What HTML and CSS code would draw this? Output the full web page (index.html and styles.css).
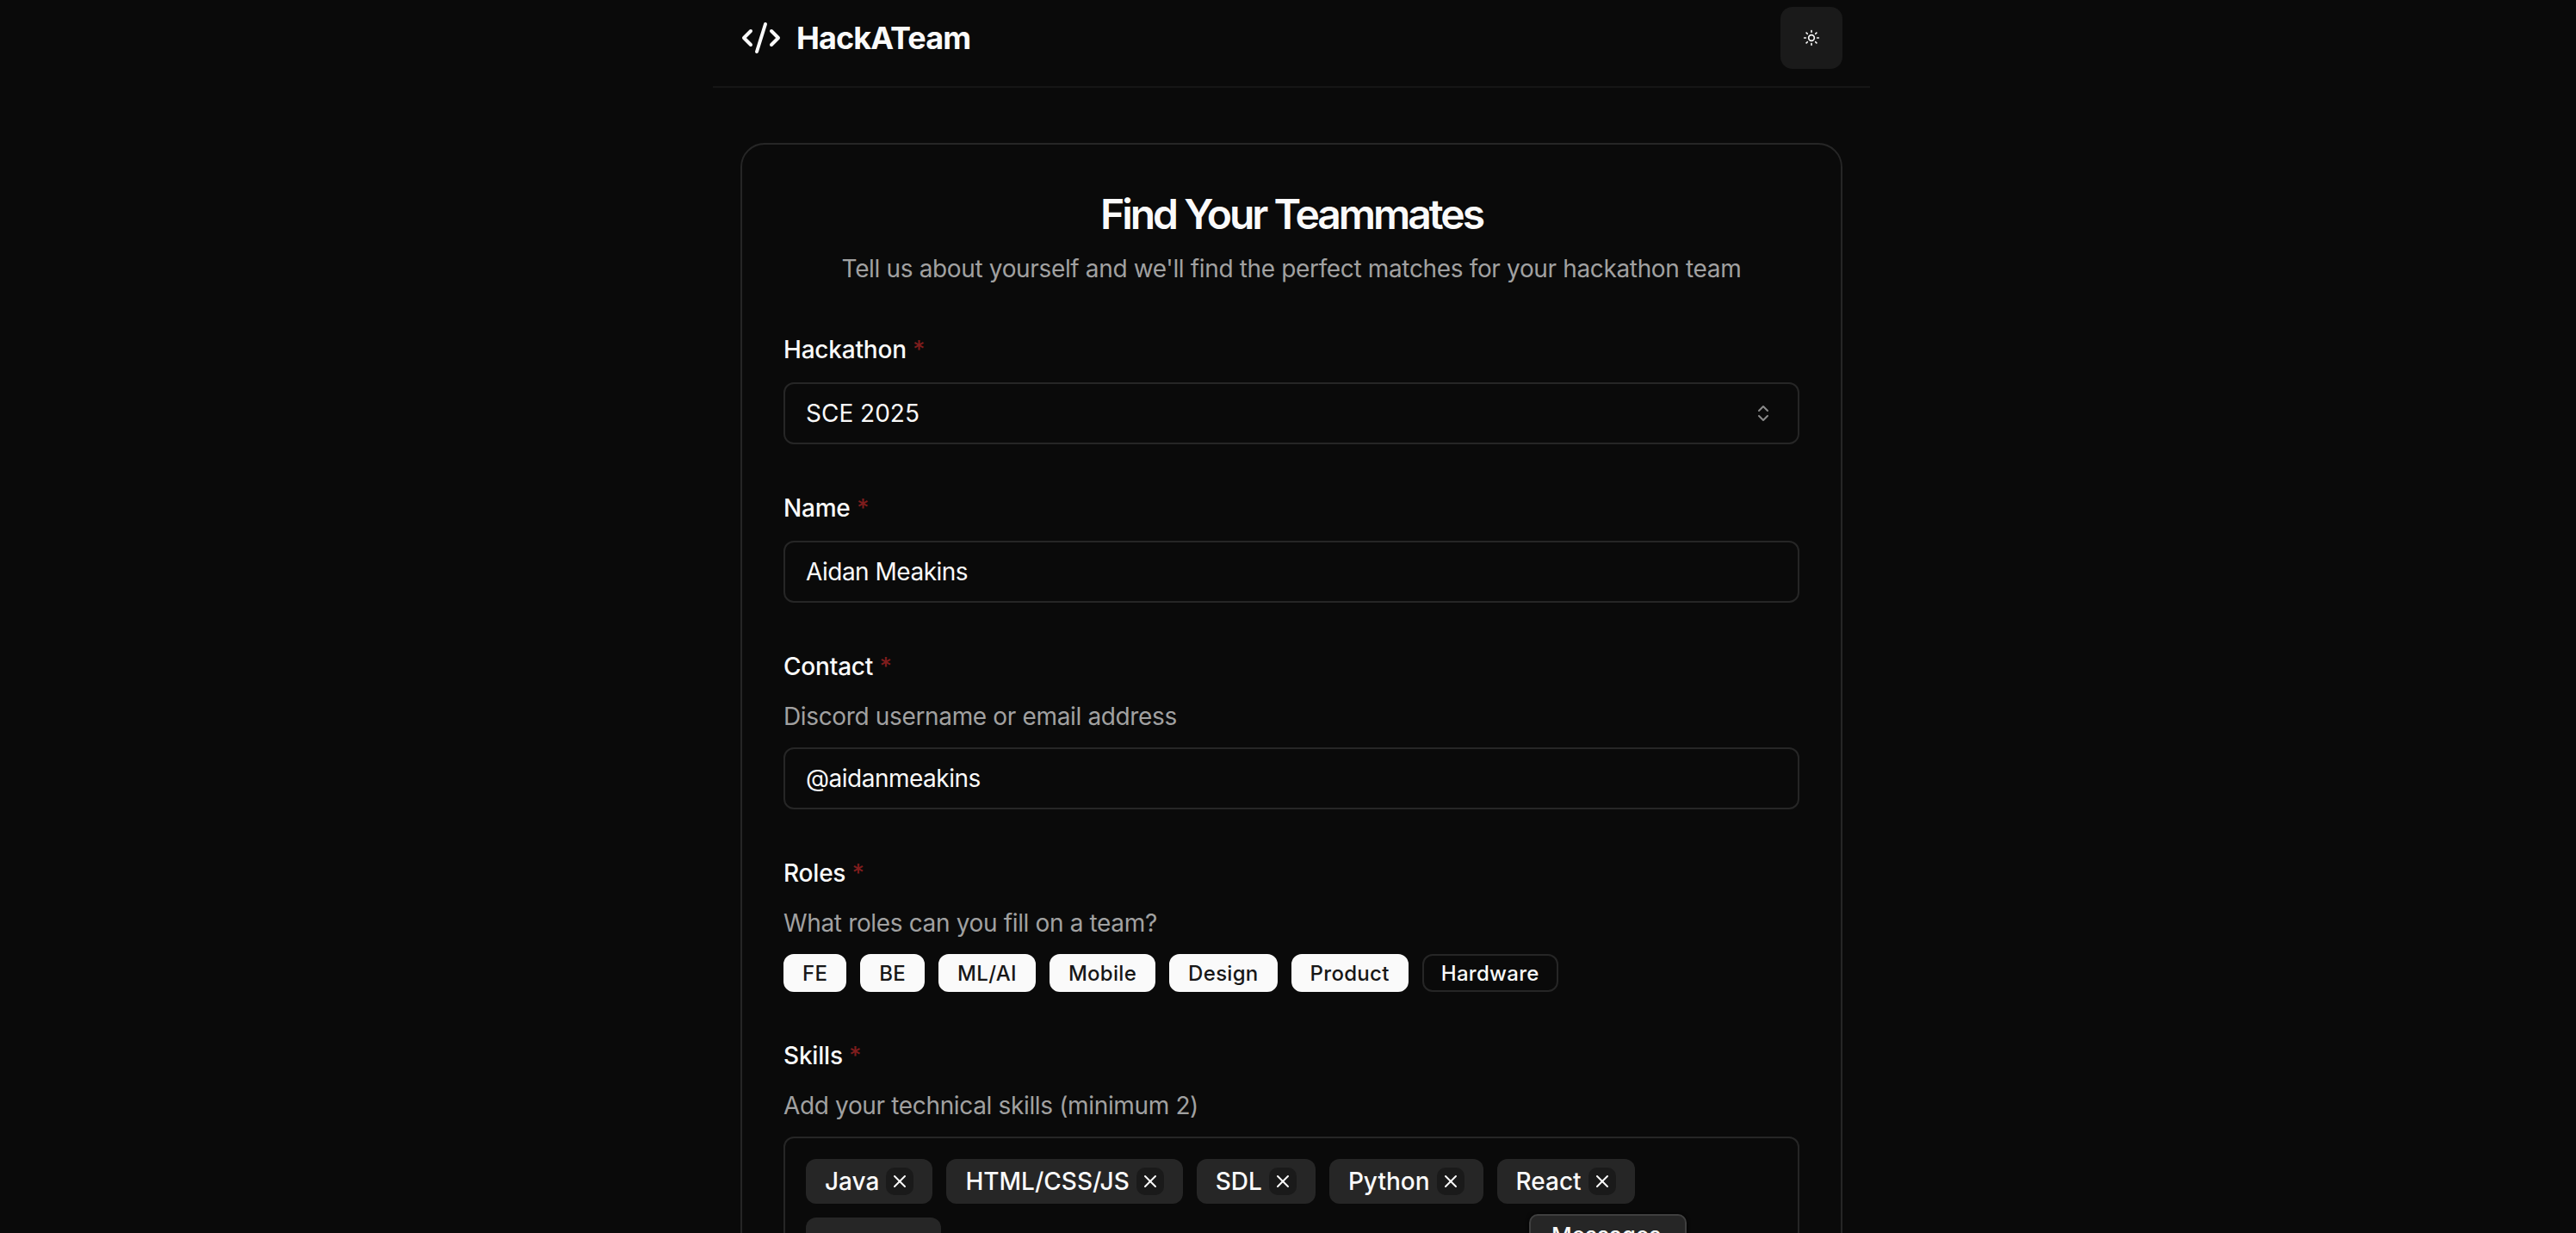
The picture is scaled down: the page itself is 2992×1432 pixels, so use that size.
FILE: index.html
```html
<!DOCTYPE html>
<html>

<head>
    <meta charset="utf-8" />
    <title>HackATeam</title>
    <meta name="viewport" content="width=device-width, initial-scale=1">
    <link rel="stylesheet" href="styles.css">
</head>

<body>
    <div class="page">
        <header class="topbar">
            <div class="brand">
                <svg class="brand-icon" viewBox="0 0 24 24" fill="none" stroke="currentColor" stroke-width="2"
                    stroke-linecap="round" stroke-linejoin="round">
                    <path d="m18 16 4-4-4-4" />
                    <path d="m6 8-4 4 4 4" />
                    <path d="m14.5 4-5 16" />
                </svg>
                <span class="brand-name">HackATeam</span>
            </div>
            <button type="button" class="theme-btn">
                <svg class="theme-icon" viewBox="0 0 24 24" fill="none" stroke="currentColor" stroke-width="2"
                    stroke-linecap="round" stroke-linejoin="round">
                    <circle cx="12" cy="12" r="4" />
                    <path d="M12 2v2" />
                    <path d="M12 20v2" />
                    <path d="m4.93 4.93 1.41 1.41" />
                    <path d="m17.66 17.66 1.41 1.41" />
                    <path d="M2 12h2" />
                    <path d="M20 12h2" />
                    <path d="m6.34 17.66-1.41 1.41" />
                    <path d="m19.07 4.93-1.41 1.41" />
                </svg>
            </button>
        </header>

        <main class="card">
            <h1 class="card-title">Find Your Teammates</h1>
            <p class="card-sub">Tell us about yourself and we'll find the perfect matches for your hackathon team</p>

            <div class="field">
                <label class="label">Hackathon <span class="req">*</span></label>
                <div class="input select">
                    <span>SCE 2025</span>
                    <svg class="chevrons" viewBox="0 0 24 24" fill="none" stroke="currentColor" stroke-width="2"
                        stroke-linecap="round" stroke-linejoin="round">
                        <path d="m7 15 5 5 5-5" />
                        <path d="m7 9 5-5 5 5" />
                    </svg>
                </div>
            </div>

            <div class="field">
                <label class="label">Name <span class="req">*</span></label>
                <div class="input">Aidan Meakins</div>
            </div>

            <div class="field">
                <label class="label">Contact <span class="req">*</span></label>
                <p class="hint">Discord username or email address</p>
                <div class="input">@aidanmeakins</div>
            </div>

            <div class="field">
                <label class="label">Roles <span class="req">*</span></label>
                <p class="hint">What roles can you fill on a team?</p>
                <div class="roles">
                    <button type="button" class="role on">FE</button>
                    <button type="button" class="role on">BE</button>
                    <button type="button" class="role on">ML/AI</button>
                    <button type="button" class="role on">Mobile</button>
                    <button type="button" class="role on">Design</button>
                    <button type="button" class="role on">Product</button>
                    <button type="button" class="role">Hardware</button>
                </div>
            </div>

            <div class="field">
                <label class="label">Skills <span class="req">*</span></label>
                <p class="hint">Add your technical skills (minimum 2)</p>
                <div class="skills-box">
                    <div class="skill">Java <span class="skill-x"><svg viewBox="0 0 24 24"><path d="M18 6 6 18" /><path d="m6 6 12 12" /></svg></span></div>
                    <div class="skill">HTML/CSS/JS <span class="skill-x"><svg viewBox="0 0 24 24"><path d="M18 6 6 18" /><path d="m6 6 12 12" /></svg></span></div>
                    <div class="skill">SDL <span class="skill-x"><svg viewBox="0 0 24 24"><path d="M18 6 6 18" /><path d="m6 6 12 12" /></svg></span></div>
                    <div class="skill">Python <span class="skill-x"><svg viewBox="0 0 24 24"><path d="M18 6 6 18" /><path d="m6 6 12 12" /></svg></span></div>
                    <div class="skill">React <span class="skill-x"><svg viewBox="0 0 24 24"><path d="M18 6 6 18" /><path d="m6 6 12 12" /></svg></span></div>
                    <div class="skill skill-blank"></div>
                    <div class="suggest">Messages</div>
                </div>
            </div>
        </main>
    </div>
</body>

</html>
```
FILE: styles.css
```css
html,
body {
    margin: 0;
    height: 1432px;
    overflow: hidden;
}

body {
    background-color: #0a0a0a;
    color: #fafafa;
    font-family: Inter, "Liberation Sans", sans-serif;
    font-size: 28px;
    line-height: 40px;
    padding-left: 8px;
}

.page {
    width: 1344px;
    height: 1432px;
    overflow: hidden;
    margin: 0 auto;
}

.topbar {
    display: flex;
    justify-content: space-between;
    align-items: center;
    padding: 8px 32px 20px;
    border-bottom: 2px solid #161616;
}

.brand {
    display: flex;
    align-items: center;
    gap: 17px;
}

.brand-icon {
    width: 48px;
    height: 48px;
}

.brand-name {
    font-size: 36px;
    font-weight: 700;
    letter-spacing: -0.9px;
}

.theme-btn {
    width: 72px;
    height: 72px;
    padding: 0;
    border: none;
    border-radius: 14px;
    background-color: #1a1a1a;
    color: #fafafa;
    display: flex;
    align-items: center;
    justify-content: center;
}

.theme-icon {
    width: 20px;
    height: 20px;
}

.card {
    margin: 64px 32px 0;
    padding: 50px 48px 0;
    border: 2px solid #262626;
    border-radius: 28px;
}

.card-title {
    margin: 0;
    font-size: 48px;
    line-height: 62px;
    font-weight: 600;
    letter-spacing: -3px;
    text-align: center;
}

.card-sub {
    margin: 12px 0 0;
    color: #a1a1a1;
    letter-spacing: -0.35px;
    text-align: center;
}

.field {
    display: flex;
    flex-direction: column;
    gap: 16px;
    margin-bottom: 56px;
}

.card-sub + .field {
    margin-top: 56px;
}

.label {
    font-weight: 500;
    letter-spacing: -0.2px;
    line-height: 36px;
    margin-bottom: 4px;
}

.req {
    color: #7f1d1d;
}

.hint {
    margin: 0;
    color: #a1a1a1;
    letter-spacing: -0.35px;
}

.input {
    height: 72px;
    box-sizing: border-box;
    display: flex;
    align-items: center;
    padding: 0 24px;
    border: 2px solid #262626;
    border-radius: 12px;
    letter-spacing: -0.5px;
}

.select {
    justify-content: space-between;
    letter-spacing: 0;
}

.chevrons {
    width: 24px;
    height: 24px;
    margin-right: 4px;
    color: #8a8a8a;
}

.roles {
    display: flex;
    gap: 16px;
}

.role {
    height: 44px;
    box-sizing: border-box;
    padding: 0 20px;
    border: 2px solid #262626;
    border-radius: 12px;
    background-color: #0a0a0a;
    color: #fafafa;
    font-family: inherit;
    font-size: 24px;
    font-weight: 500;
    letter-spacing: 0.3px;
}

.role.on {
    border-color: #fafafa;
    background-color: #fafafa;
    color: #171717;
}

.skills-box {
    position: relative;
    display: flex;
    flex-wrap: wrap;
    gap: 16px;
    padding: 24px;
    border: 2px solid #262626;
    border-radius: 12px;
}

.skill {
    height: 52px;
    box-sizing: border-box;
    display: flex;
    align-items: center;
    gap: 8px;
    padding: 0 22px;
    border-radius: 12px;
    background-color: #262626;
    font-weight: 500;
}

.skill-blank {
    width: 157px;
}

.skill-x {
    width: 32px;
    height: 32px;
    display: flex;
    align-items: center;
    justify-content: center;
    border-radius: 10px;
    background-color: #1a1a1a;
}

.skill-x svg {
    width: 24px;
    height: 24px;
    fill: none;
    stroke: #fafafa;
    stroke-width: 2;
    stroke-linecap: round;
}

.suggest {
    position: absolute;
    left: 864px;
    top: 88px;
    width: 183px;
    box-sizing: border-box;
    padding: 3px 24px;
    border: 2px solid #3f3f3f;
    border-radius: 10px;
    background-color: #262626;
    box-shadow: 0 0 4px #000;
    font-size: 26px;
    font-weight: 500;
}
```
